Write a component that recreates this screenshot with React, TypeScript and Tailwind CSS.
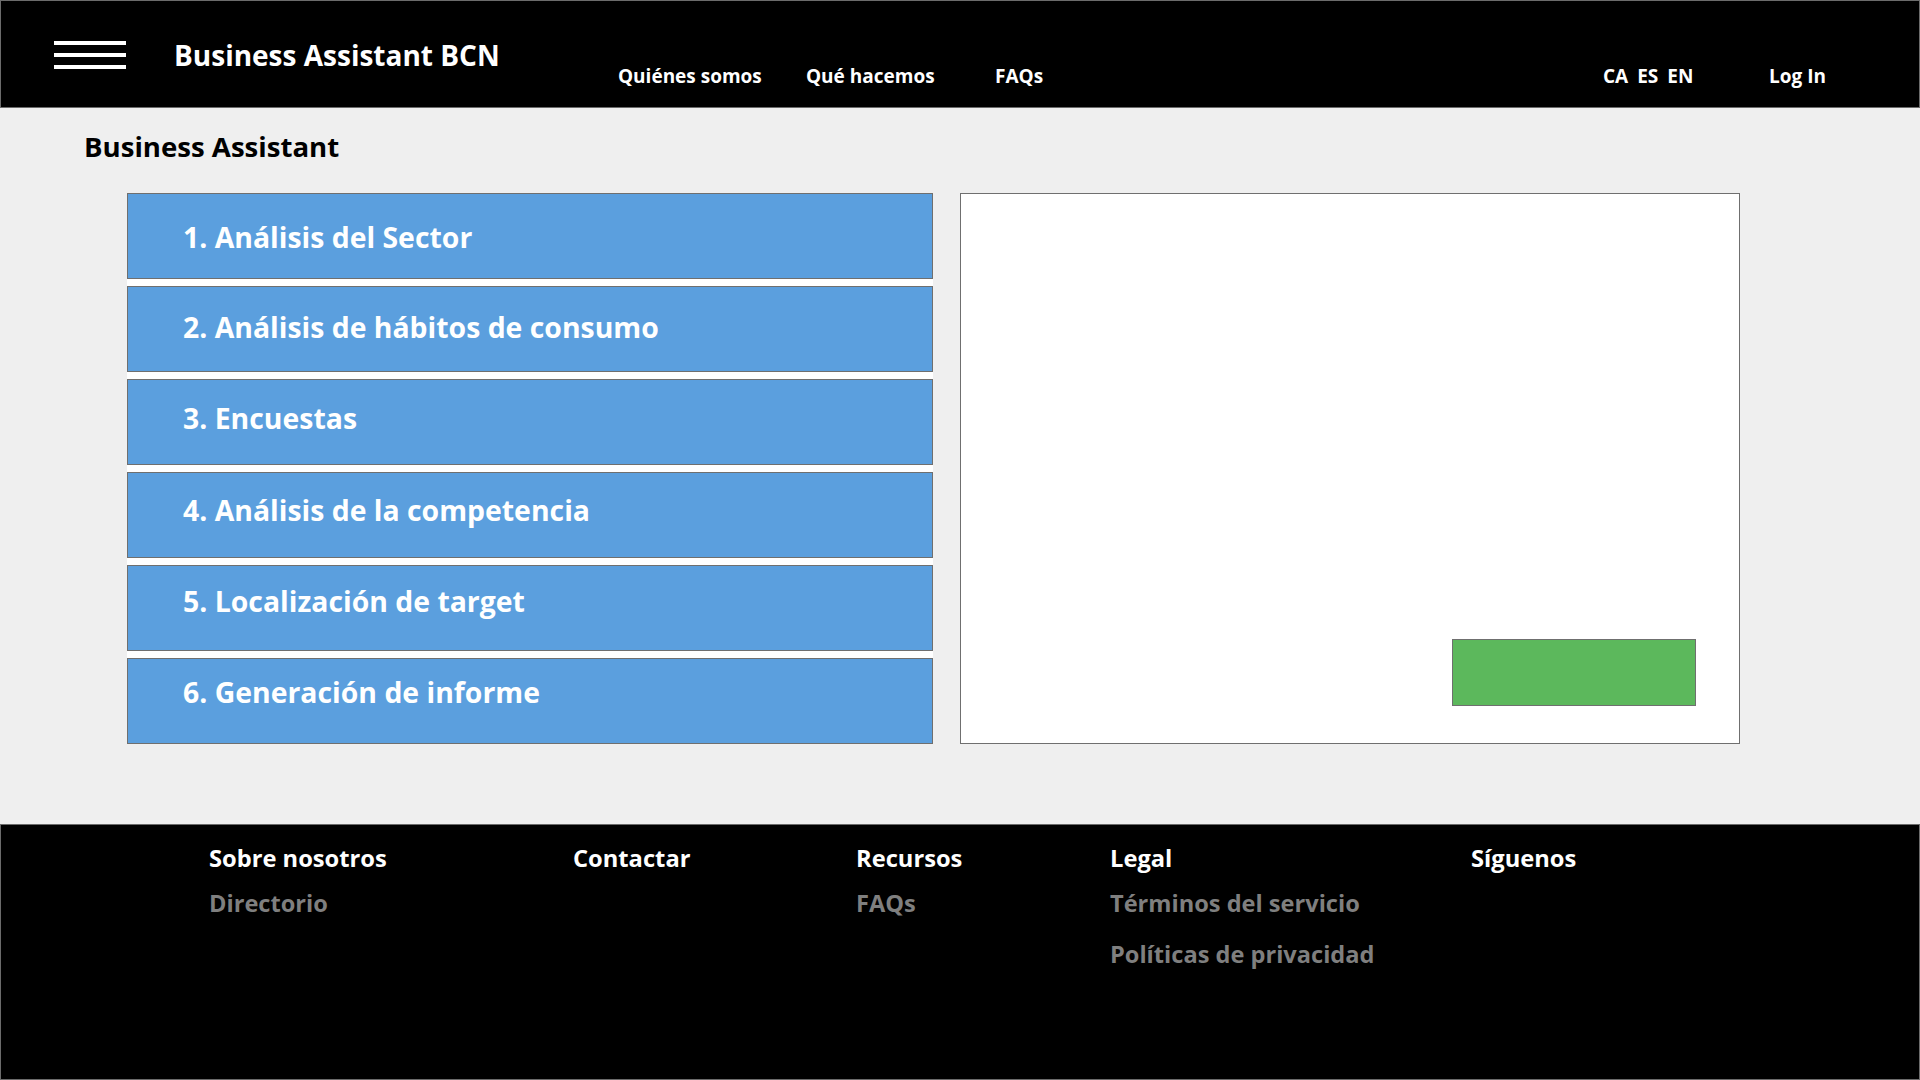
import React from "react"

// pt per fila: el texto del mockup no queda centrado igual en cada caja
const pasos = [
  { label: "1. Análisis del Sector", pt: "pt-[29px]" },
  { label: "2. Análisis de hábitos de consumo", pt: "pt-[26px]" },
  { label: "3. Encuestas", pt: "pt-[24px]" },
  { label: "4. Análisis de la competencia", pt: "pt-[23px]" },
  { label: "5. Localización de target", pt: "pt-[21px]" },
  { label: "6. Generación de informe", pt: "pt-[19px]" },
]

const columnas = [
  { titulo: "Sobre nosotros", links: ["Directorio"], w: "w-[364px]" },
  { titulo: "Contactar", links: [], w: "w-[283px]" },
  { titulo: "Recursos", links: ["FAQs"], w: "w-[254px]" },
  { titulo: "Legal", links: ["Términos del servicio", "Políticas de privacidad"], w: "w-[361px]" },
  { titulo: "Síguenos", links: [], w: "flex-1" },
]

function Header() {
  return (
    <header className="h-[108px] shrink-0 bg-black border border-[#6b6b6b] flex items-start text-white">
      <div className="w-[617px] flex items-start">
        <button className="ml-[53px] mt-[40px] flex flex-col gap-[8px]">
          <span className="block w-[72px] h-[4px] bg-white" />
          <span className="block w-[72px] h-[4px] bg-white" />
          <span className="block w-[72px] h-[4px] bg-white" />
        </button>
        <h1 className="ml-[48px] mt-[40px] text-[28px] leading-none font-bold">
          Business Assistant BCN
        </h1>
      </div>
      <nav className="flex flex-1 items-start mt-[66px] text-[19px] leading-none font-bold">
        <a className="w-[188px]">Quiénes somos</a>
        <a className="w-[189px]">Qué hacemos</a>
        <a className="w-[608px]">FAQs</a>
        <div className="w-[166px] flex gap-[9px]">
          <span>CA</span>
          <span>ES</span>
          <span>EN</span>
        </div>
        <a>Log In</a>
      </nav>
    </header>
  )
}

export default function App() {
  return (
    <div className="w-[1920px] h-[1080px] bg-[#efefef] flex flex-col font-['Open_Sans',sans-serif]">
      <Header />

      <main className="flex-1 pl-[84px] pt-[25px]">
        <h2 className="text-[27.6px] leading-none font-bold text-black">Business Assistant</h2>
        <div className="flex items-start mt-[32px] ml-[43px]">
          <ul className="w-[806px] bg-white flex flex-col gap-[7px]">
            {pasos.map((p) => (
              <li
                key={p.label}
                className={`h-[86px] bg-[#5b9fde] border border-[#6f6f6f] flex items-start pl-[55px] text-white text-[28.4px] leading-none font-bold ${p.pt}`}
              >
                {p.label}
              </li>
            ))}
          </ul>
          <section className="ml-[27px] w-[780px] h-[551px] bg-white border border-[#6f6f6f] flex flex-col justify-end items-end pr-[43px] pb-[37px]">
            <button className="w-[244px] h-[67px] bg-[#5cb85c] border border-[#6f6f6f]" />
          </section>
        </div>
      </main>

      <footer className="h-[256px] shrink-0 bg-black border border-[#6b6b6b] flex pl-[208px] pt-[22px]">
        {columnas.map((c) => (
          <div key={c.titulo} className={`${c.w} flex flex-col`}>
            <p className="text-[23.7px] leading-none font-bold text-white">{c.titulo}</p>
            <div className="mt-[21px] flex flex-col gap-[28px]">
              {c.links.map((l) => (
                <a key={l} className="text-[23.6px] leading-none font-bold text-[#7f7f7f]">
                  {l}
                </a>
              ))}
            </div>
          </div>
        ))}
      </footer>
    </div>
  )
}
